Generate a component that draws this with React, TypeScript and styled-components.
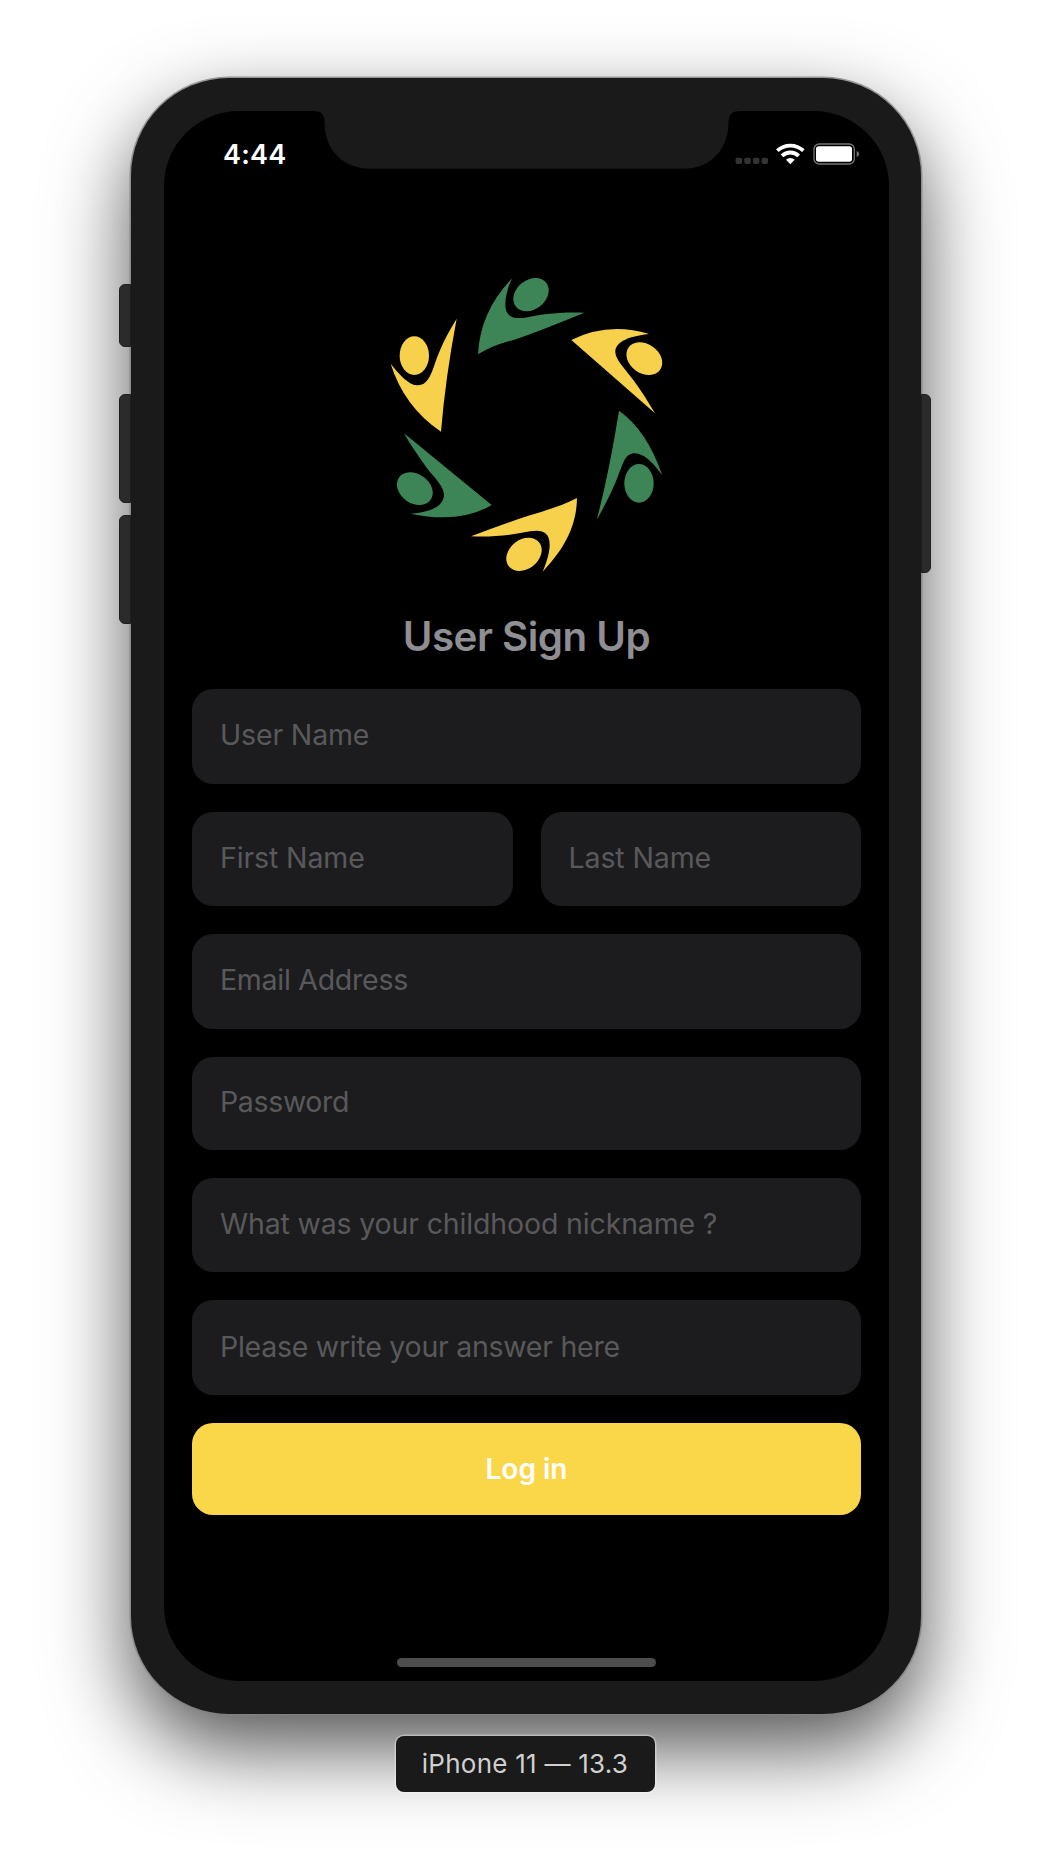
import React from "react";
import styled, { createGlobalStyle } from "styled-components";

const GlobalStyle = createGlobalStyle`
  *, *::before, *::after { box-sizing: border-box; }
  body { margin: 0; background: #fff; }
`;

const Stage = styled.main`
  width: 1052px;
  height: 1864px;
  padding-top: 78px;
  overflow: hidden;
  display: flex;
  flex-direction: column;
  align-items: center;
  background: #fff;
  font-family: Inter, "Liberation Sans", sans-serif;
`;

const Device = styled.div`
  display: flex;
  width: 814px;
  height: 1636px;
`;

const Rail = styled.div<{ $top: number }>`
  width: 12px;
  padding-top: ${(p) => p.$top}px;
  display: flex;
  flex-direction: column;
  position: relative;
  z-index: 1;
`;

const SideKey = styled.div<{ $height: number; $gap?: number; $right?: boolean }>`
  width: ${(p) => (p.$right ? 9.5 : 12)}px;
  height: ${(p) => p.$height}px;
  margin-top: ${(p) => p.$gap ?? 0}px;
  background: #2b2b2b;
  border: 1px solid #1e1e1e;
  border-radius: ${(p) => (p.$right ? "0 6px 6px 0" : "6px 0 0 6px")};
`;

const Bezel = styled.div`
  width: 790px;
  height: 1636px;
  padding: 33px 32px 33px 33px;
  border-radius: 98px;
  background: #1a1a1a;
  box-shadow: 0 0 0 1.5px rgba(130, 130, 130, 0.8), 0 34px 82px rgba(0, 0, 0, 0.68);
`;

const Screen = styled.div`
  width: 725px;
  height: 1570px;
  border-radius: 75px;
  background: #000;
  display: flex;
  flex-direction: column;
  align-items: center;
  overflow: hidden;
`;

const StatusBar = styled.header`
  width: 100%;
  height: 58px;
  display: flex;
`;

const Clock = styled.time`
  width: 149px;
  padding: 26px 0 0 59px;
  color: #fff;
  font-size: 27px;
  line-height: 36px;
  font-weight: 600;
  letter-spacing: 0.2px;
  white-space: nowrap;
`;

const Indicators = styled.div`
  width: 148px;
  padding-top: 32px;
  margin-left: -8px;
`;

const Logo = styled.svg`
  width: 295px;
  height: 320px;
  margin: 96px 0 0 2px;
  display: block;
  flex: none;
`;

const Title = styled.h1`
  margin: 28px 0 0;
  height: 48px;
  color: #8e8e93;
  font-size: 40.3px;
  line-height: 48px;
  font-weight: 600;
  letter-spacing: -0.5px;
  white-space: nowrap;
`;

const Form = styled.form`
  width: 669px;
  margin-top: 28px;
  display: flex;
  flex-direction: column;
  gap: 28px;
`;

const Pair = styled.div`
  display: grid;
  grid-template-columns: 1fr 1fr;
  gap: 28px;
`;

const Field = styled.label<{ $track: number; $height?: number }>`
  height: ${(p) => p.$height ?? 94.5}px;
  padding: 0 0 2px 28px;
  display: flex;
  align-items: center;
  border-radius: 21px;
  background: #1c1c1e;
  color: #59595c;
  font-size: 28.5px;
  line-height: 36px;
  letter-spacing: ${(p) => p.$track}px;
  white-space: nowrap;
`;

const Submit = styled.button`
  height: 92px;
  padding: 0;
  border: 0;
  border-radius: 21px;
  background: #fad649;
  color: #fff;
  font: 600 28px/36px Inter, "Liberation Sans", sans-serif;
`;

const HomeIndicator = styled.div`
  width: 259px;
  height: 9px;
  margin: auto 0 14px;
  border-radius: 5px;
  background: #4d4d4d;
`;

const DeviceLabel = styled.div`
  width: 259px;
  height: 56px;
  margin: 22px 2px 0 0;
  display: flex;
  align-items: center;
  justify-content: center;
  border-radius: 8px;
  background: #1a1a1a;
  box-shadow: 0 0 0 1.5px rgba(255, 255, 255, 0.35);
  color: #d0d0d0;
  font-size: 26px;
  line-height: 32px;
  letter-spacing: 0.25px;
  white-space: nowrap;
  position: relative;
`;

const YELLOW = "#f7d14c";
const GREEN = "#3d8557";

function Notch() {
  return (
    <svg width="428" height="58" viewBox="0 0 428 58">
      <path
        fill="#1a1a1a"
        d="M0 0C8 0 11.500 3 11.500 11C11.500 36 27 57.700 58 57.700H370C400 57.700 415.500 36 415.500 11C415.500 3 420 0 428 0Z"
      />
    </svg>
  );
}

function StatusIcons() {
  return (
    <svg width="128" height="23" viewBox="0 0 384 69">
      <g fill="#333">
        {[0, 26, 52, 78].map((x) => (
          <rect key={x} x={x + 8} y="44" width="19" height="19" rx="5" />
        ))}
      </g>
      <g fill="none" stroke="#fff" strokeWidth="11.500">
        <path d="M133 23A57.500 57.500 0 0 1 211 23" />
        <path d="M147 38.500A36 36 0 0 1 197 38.500" />
      </g>
      <path fill="#fff" d="M172 64L159 50.500A19 19 0 0 1 185 50.500Z" />
      <rect x="243" y="3" width="121" height="60" rx="16" fill="none" stroke="#747474" strokeWidth="4" />
      <rect x="249" y="10" width="108" height="46" rx="8" fill="#fff" />
      <path fill="#747474" d="M371 24C376 26 378 29 378 33S376 40 371 42Z" />
    </svg>
  );
}

function Head({ x, y, turn = 0, fill }: { x: number; y: number; turn?: number; fill: string }) {
  return <ellipse cx={x} cy={y} rx="58" ry="44" fill={fill} transform={`rotate(${turn} ${x} ${y})`} />;
}

function PeopleRing() {
  return (
    <Logo viewBox="0 0 885 960">
      <path fill={GREEN} d="M396 40Q300 140 294 268Q335 243 385 229Q430 218 613 143C540 140 480 148 435 158C395 164 376 150 376 120C376 90 386 62 396 40Z" />
      <Head x={453} y={89} turn={-38} fill={GREEN} />
      <path fill={YELLOW} d="M574 225Q685 170 807 207C735 215 705 235 706 262C707 285 735 312 760 345C785 378 807 415 825 445Z" />
      <Head x={793} y={281} turn={35} fill={YELLOW} />
      <path fill={GREEN} d="M717 437Q800 495 847 631C820 593 790 565 765 565C735 565 730 595 717 625C697 680 675 720 650 765Q688 620 717 437Z" />
      <Head x={777} y={655} turn={90} fill={GREEN} />
      <path fill={YELLOW} d="M273 814Q380 773 450 751C500 735 540 725 591 699C590 795 540 865 488 920C505 880 509 855 509 840C509 800 485 793 450 799C390 812 330 817 273 814Z" />
      <Head x={432} y={868} turn={-38} fill={YELLOW} />
      <path fill={GREEN} d="M72 505L335 720Q240 777 90 746C150 743 192 723 192 689C192 665 165 640 140 608C115 573 92 540 72 505Z" />
      <Head x={104.5} y={671} turn={35} fill={GREEN} />
      <path fill={YELLOW} d="M32 296Q72 425 183 500Q196 340 230 161C200 210 180 250 165 295C152 335 140 361 114 361C85 361 55 325 32 296Z" />
      <Head x={103} y={272} turn={90} fill={YELLOW} />
    </Logo>
  );
}

export default function App() {
  return (
    <>
      <GlobalStyle />
      <Stage>
        <Device>
          <Rail $top={206}>
            <SideKey $height={63} />
            <SideKey $height={109} $gap={47} />
            <SideKey $height={109} $gap={12} />
          </Rail>
          <Bezel>
            <Screen>
              <StatusBar>
                <Clock>4:44</Clock>
                <Notch />
                <Indicators>
                  <StatusIcons />
                </Indicators>
              </StatusBar>
              <PeopleRing />
              <Title>User Sign Up</Title>
              <Form>
                <Field $track={-0.15}>User Name</Field>
                <Pair>
                  <Field $track={-0.12}>First Name</Field>
                  <Field $track={-0.12}>Last Name</Field>
                </Pair>
                <Field $track={-0.27}>Email Address</Field>
                <Field $track={-0.35} $height={93.3}>Password</Field>
                <Field $track={-0.15}>What was your childhood nickname ?</Field>
                <Field $track={-0.26}>Please write your answer here</Field>
                <Submit type="button">Log in</Submit>
              </Form>
              <HomeIndicator />
            </Screen>
          </Bezel>
          <Rail $top={316}>
            <SideKey $height={179} $right />
          </Rail>
        </Device>
        <DeviceLabel>iPhone 11 — 13.3</DeviceLabel>
      </Stage>
    </>
  );
}
